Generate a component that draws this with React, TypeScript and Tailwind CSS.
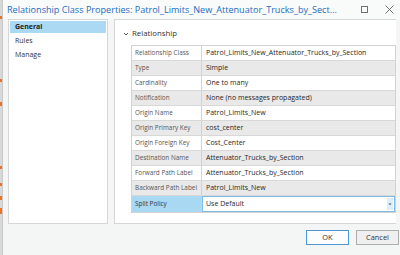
const rows: [string, string][] = [
  ['Relationship Class', 'Patrol_Limits_New_Attenuator_Trucks_by_Section'],
  ['Type', 'Simple'],
  ['Cardinality', 'One to many'],
  ['Notification', 'None (no messages propagated)'],
  ['Origin Name', 'Patrol_Limits_New'],
  ['Origin Primary Key', 'cost_center'],
  ['Origin Foreign Key', 'Cost_Center'],
  ['Destination Name', 'Attenuator_Trucks_by_Section'],
  ['Forward Path Label', 'Attenuator_Trucks_by_Section'],
  ['Backward Path Label', 'Patrol_Limits_New'],
]

const font = { fontFamily: '"Open Sans", "Noto Sans", sans-serif' }

export default function App() {
  return (
    <div className="flex h-[255px] w-[400px] overflow-hidden bg-[#f4f5f5]" style={font}>
      {/* window behind, peeking out on the left */}
      <div className="flex w-[2px] flex-col bg-[#d8d8d8]">
        <div className="mt-[16px] h-[3px] bg-[#e8742c]" />
        <div className="mt-[60px] h-[3px] bg-[#e8742c]" />
        <div className="mt-[20px] h-[4px] bg-[#e8742c]" />
        <div className="mt-[60px] h-[3px] bg-[#e8742c]" />
        <div className="mt-[14px] h-[3px] bg-[#e8742c]" />
        <div className="mt-[10px] h-[4px] bg-[#e8742c]" />
        <div className="mt-[8px] h-[6px] bg-[#e8742c]" />
      </div>

      <div className="flex flex-1 flex-col border-l border-[#c9c9c9]">
        {/* Title bar */}
        <div className="flex h-[19px] items-center bg-[#f9fafa] pl-[4px]">
          <span className="flex-1 whitespace-nowrap text-[9.1px] leading-none text-[#1c6dc0]">
            Relationship Class Properties: Patrol_Limits_New_Attenuator_Trucks_by_Sect...
          </span>
          <div className="mr-[17px] h-[7px] w-[7px] border border-[#707070]" />
          <svg width="9" height="9" viewBox="0 0 9 9" className="mr-[6px]">
            <path d="M0.5 0.5 L8.5 8.5 M8.5 0.5 L0.5 8.5" stroke="#606060" strokeWidth="0.9" />
          </svg>
        </div>

        {/* Body */}
        <div className="flex h-[205px] gap-[6px] pl-[5px] pr-[4px]">
          {/* Nav */}
          <div className="flex w-[100px] flex-col border border-[#d6d6d6] bg-white p-px text-[7px] text-[#333]">
            <div className="flex h-[12px] items-center bg-[#abd9f4] pl-[5px] font-bold text-[#222]">General</div>
            <div className="flex h-[15px] items-center pl-[5px] pt-[2px]">Rules</div>
            <div className="flex h-[15px] items-center pl-[5px]">Manage</div>
          </div>

          {/* Property page */}
          <div className="flex flex-1 flex-col border border-r-0 border-[#d6d6d6] bg-white">
            <div className="flex h-[25px] items-center gap-[3px] pl-[8px] pt-[2px] text-[7.8px] text-[#333]">
              <svg width="6" height="6" viewBox="0 0 6 6">
                <path d="M1 2 L3 4 L5 2" fill="none" stroke="#444" strokeWidth="0.9" />
              </svg>
              Relationship
            </div>
            <div className="ml-[16px] flex flex-col border border-[#d2d2d2]">
              {rows.map(([label, value], i) => (
                <div
                  key={label}
                  className={`flex h-[15px] border-b border-[#d8d8d8] ${i % 2 === 1 ? 'bg-[#e9e9e9]' : 'bg-white'}`}
                >
                  <div className="flex w-[70px] items-center whitespace-nowrap border-r border-[#d2d2d2] pl-[3px] text-[6.4px] text-[#555]">
                    {label}
                  </div>
                  <div className="flex flex-1 items-center whitespace-nowrap pl-[4px] text-[7px] text-[#1f1f1f]">{value}</div>
                </div>
              ))}
              <div className="flex h-[16px]">
                <div className="flex w-[70px] items-center border-r border-[#d2d2d2] bg-[#a9d8f3] pl-[3px] text-[6.4px] text-[#333]">
                  Split Policy
                </div>
                <div className="flex flex-1 items-center border border-[#7fbbe6] bg-white pl-[3px] text-[7px] text-[#1f1f1f]">
                  <span className="flex-1">Use Default</span>
                  <div className="mr-px flex h-[12px] w-[6px] items-center justify-center bg-[#dbeefb]">
                    <svg width="4" height="3" viewBox="0 0 4 3">
                      <path d="M0.5 0.5 L2 2.2 L3.5 0.5 Z" fill="#555" />
                    </svg>
                  </div>
                </div>
              </div>
            </div>
          </div>
        </div>

        {/* Footer */}
        <div className="flex flex-1 items-center justify-end gap-[7px] pr-[1px] pb-[4px] text-[7.4px] text-[#333]">
          <button className="flex h-[15px] w-[43px] items-center justify-center border border-[#4b98d9] bg-[#fdfdfd]">OK</button>
          <button className="flex h-[15px] w-[43px] items-center justify-center border border-[#adadad] bg-[#efefef]">Cancel</button>
        </div>
      </div>
    </div>
  )
}
